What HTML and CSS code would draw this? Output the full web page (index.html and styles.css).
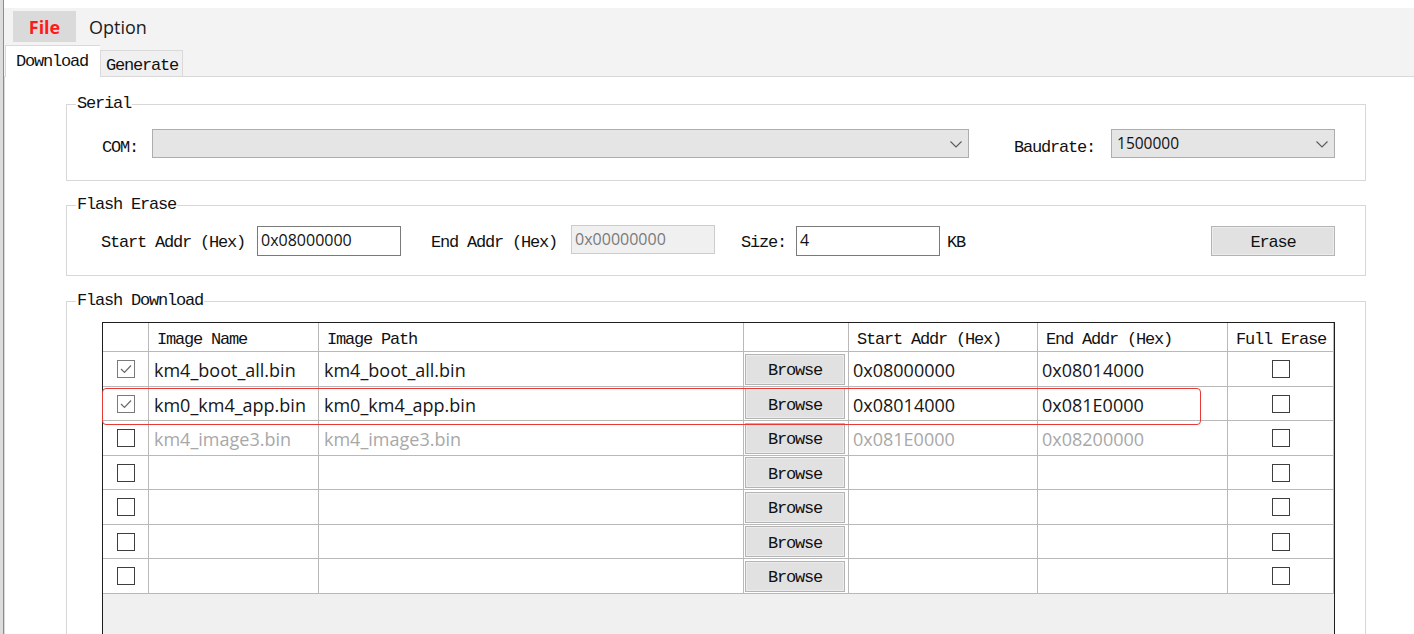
FILE: index.html
```html
<!DOCTYPE html>
<html lang="en">
<head>
<meta charset="utf-8">
<title>Image Tool</title>
<link rel="stylesheet" href="styles.css">
</head>
<body>
<div class="screen">
  <div class="backdrop"></div>
  <div class="window">
    <div class="topgap"></div>
    <div class="menubar">
      <div class="menu menu-file">File</div>
      <div class="menu menu-option">Option</div>
    </div>
    <div class="tabs">
      <div class="tab tab-active">Download</div>
      <div class="tab">Generate</div>
    </div>
    <div class="panel">
      <fieldset class="group group-serial">
        <legend>Serial</legend>
        <div class="row row-serial">
          <span class="label">COM:</span>
          <div class="combo combo-com">
            <span class="combo-text"></span>
            <svg class="chev" width="12" height="7" viewBox="0 0 12 7"><polyline points="0.5,0.5 6,6 11.5,0.5" fill="none" stroke="#5a5a5a" stroke-width="1.1"/></svg>
          </div>
          <span class="label label-baud">Baudrate:</span>
          <div class="combo combo-baud">
            <span class="combo-text">1500000</span>
            <svg class="chev" width="12" height="7" viewBox="0 0 12 7"><polyline points="0.5,0.5 6,6 11.5,0.5" fill="none" stroke="#5a5a5a" stroke-width="1.1"/></svg>
          </div>
        </div>
      </fieldset>

      <fieldset class="group group-erase">
        <legend>Flash Erase</legend>
        <div class="row row-erase">
          <span class="label">Start Addr (Hex)</span>
          <div class="input input-start">0x08000000</div>
          <span class="label label-end">End Addr (Hex)</span>
          <div class="input input-disabled">0x00000000</div>
          <span class="label label-size">Size:</span>
          <div class="input input-size">4</div>
          <span class="label label-kb">KB</span>
          <div class="button button-erase">Erase</div>
        </div>
      </fieldset>

      <fieldset class="group group-download">
        <legend>Flash Download</legend>
        <div class="grid-wrap">
          <div class="grid" role="table">
            <div class="cell head"></div>
            <div class="cell head">Image Name</div>
            <div class="cell head">Image Path</div>
            <div class="cell head"></div>
            <div class="cell head">Start Addr (Hex)</div>
            <div class="cell head">End Addr (Hex)</div>
            <div class="cell head">Full Erase</div>

            <div class="cell ctr"><span class="check checked"><svg width="16" height="16" viewBox="0 0 16 16"><polyline points="3,8 6.5,11.5 13,4.5" fill="none" stroke="#6a6a6a" stroke-width="1.2"/></svg></span></div>
            <div class="cell txt">km4_boot_all.bin</div>
            <div class="cell txt">km4_boot_all.bin</div>
            <div class="cell btncell"><div class="button button-browse">Browse</div></div>
            <div class="cell txt addr">0x08000000</div>
            <div class="cell txt addr">0x08014000</div>
            <div class="cell ctr"><span class="check"></span></div>

            <div class="cell ctr"><span class="check checked"><svg width="16" height="16" viewBox="0 0 16 16"><polyline points="3,8 6.5,11.5 13,4.5" fill="none" stroke="#6a6a6a" stroke-width="1.2"/></svg></span></div>
            <div class="cell txt">km0_km4_app.bin</div>
            <div class="cell txt">km0_km4_app.bin</div>
            <div class="cell btncell"><div class="button button-browse">Browse</div></div>
            <div class="cell txt addr">0x08014000</div>
            <div class="cell txt addr">0x081E0000</div>
            <div class="cell ctr"><span class="check"></span></div>

            <div class="cell ctr"><span class="check"></span></div>
            <div class="cell txt dim">km4_image3.bin</div>
            <div class="cell txt dim">km4_image3.bin</div>
            <div class="cell btncell"><div class="button button-browse">Browse</div></div>
            <div class="cell txt addr dim">0x081E0000</div>
            <div class="cell txt addr dim">0x08200000</div>
            <div class="cell ctr"><span class="check"></span></div>

            <div class="cell ctr"><span class="check"></span></div>
            <div class="cell txt"></div>
            <div class="cell txt"></div>
            <div class="cell btncell"><div class="button button-browse">Browse</div></div>
            <div class="cell txt"></div>
            <div class="cell txt"></div>
            <div class="cell ctr"><span class="check"></span></div>

            <div class="cell ctr"><span class="check"></span></div>
            <div class="cell txt"></div>
            <div class="cell txt"></div>
            <div class="cell btncell"><div class="button button-browse">Browse</div></div>
            <div class="cell txt"></div>
            <div class="cell txt"></div>
            <div class="cell ctr"><span class="check"></span></div>

            <div class="cell ctr"><span class="check"></span></div>
            <div class="cell txt"></div>
            <div class="cell txt"></div>
            <div class="cell btncell"><div class="button button-browse">Browse</div></div>
            <div class="cell txt"></div>
            <div class="cell txt"></div>
            <div class="cell ctr"><span class="check"></span></div>

            <div class="cell ctr"><span class="check"></span></div>
            <div class="cell txt"></div>
            <div class="cell txt"></div>
            <div class="cell btncell"><div class="button button-browse">Browse</div></div>
            <div class="cell txt"></div>
            <div class="cell txt"></div>
            <div class="cell ctr"><span class="check"></span></div>
          </div>
          <div class="highlight"></div>
        </div>
      </fieldset>
    </div>
  </div>
</div>
</body>
</html>
```

FILE: styles.css
```css
* { box-sizing: border-box; }
html, body { margin: 0; padding: 0; }
body {
  width: 1414px;
  height: 634px;
  overflow: hidden;
  background: #ffffff;
  font-family: "Liberation Mono", monospace;
  font-size: 17px;
  letter-spacing: -1.2px;
  color: #111111;
}
.screen { display: flex; height: 634px; overflow: hidden; }
.backdrop {
  flex: none;
  width: 4px;
  background: #dcdcdc;
  border-right: 1px solid #8c8c8c;
}
.window { flex: 1; display: flex; flex-direction: column; min-width: 0; overflow: hidden; }
.topgap { height: 8px; background: #ffffff; flex: none; }

.menubar {
  flex: none;
  display: flex;
  align-items: flex-start;
  height: 36px;
  padding: 3px 0 0 9px;
  background: #f3f3f3;
  font-family: "Open Sans", "Noto Sans", sans-serif;
  font-size: 18px;
  letter-spacing: 0;
}
.menu { height: 31px; line-height: 33px; color: #1b1b1b; }
.menu-file {
  width: 63px;
  text-align: center;
  background: #dadada;
  color: #ff1a1a;
  font-weight: 700;
}
.menu-option { margin-left: 13px; }

.tabs {
  flex: none;
  display: flex;
  align-items: flex-end;
  height: 32px;
  padding-left: 1px;
  background: #f3f3f3;
}
.tab {
  height: 26px;
  line-height: 29px;
  padding: 0 4px 0 5px;
  background: #f0f0f0;
  border: 1px solid #d9d9d9;
  border-bottom: none;
}
.tab-active {
  position: relative;
  z-index: 1;
  height: 32px;
  line-height: 32px;
  margin-bottom: -1px;
  padding: 0 12px 0 10px;
  background: #ffffff;
  border-right: none;
}

.panel {
  flex: 1;
  background: #ffffff;
  border-top: 1px solid #d9d9d9;
  border-left: 1px solid #d9d9d9;
  padding-left: 61px;
  display: flex;
  flex-direction: column;
  align-items: flex-start;
}

.group {
  width: 1300px;
  margin: 0;
  padding: 0 9px;
  min-width: 0;
  border: 1px solid #d7d7d7;
}
.group legend {
  padding: 0 1px;
  line-height: 18px;
  height: 18px;
}
.group-serial { margin-top: 18px; padding-top: 16px; padding-bottom: 22px; }
.group-erase { margin-top: 15px; padding-top: 11px; padding-bottom: 19px; }
.group-download { margin-top: 16px; padding-top: 12px; height: 400px; flex: none; }

.row { display: flex; align-items: center; padding-left: 26px; }
.row-erase { padding-left: 25px; padding-right: 21px; }
.label { white-space: pre; padding-top: 4px; }
.row-serial .label { padding-top: 8px; }

.combo {
  display: flex;
  align-items: center;
  justify-content: space-between;
  height: 29px;
  padding: 0 6px 0 5px;
  background: #e5e5e5;
  border: 1px solid #adadad;
  font-family: "Open Sans", "Noto Sans", sans-serif;
  font-size: 15.5px;
  letter-spacing: 0;
  color: #111111;
}
.combo-text { margin-top: -1px; }
.combo-com { width: 817px; margin-left: 14px; }
.label-baud { margin-left: 45px; }
.combo-baud { width: 224px; margin-left: 16px; }
.chev { flex: none; margin-top: 1px; }

.input {
  width: 144px;
  height: 30px;
  line-height: 27px;
  padding-left: 3px;
  border: 1px solid #7a7a7a;
  background: #ffffff;
  font-family: "Open Sans", "Noto Sans", sans-serif;
  font-size: 16px;
  letter-spacing: 0;
  color: #111111;
}
.input-start { margin-left: 12px; }
.label-end { margin-left: 30px; }
.input-disabled {
  margin-left: 14px;
  height: 29px;
  margin-top: -2px;
  background: #f0f0f0;
  border-color: #cccccc;
  color: #7a7a7a;
}
.label-size { margin-left: 26px; }
.input-size { margin-left: 10px; }
.label-kb { margin-left: 7px; }

.button {
  display: flex;
  align-items: center;
  justify-content: center;
  background: #e1e1e1;
  border: 1px solid #b4b4b4;
  box-shadow: inset 0 0 0 1px #ececec;
  padding-top: 3px;
}
.button-erase { margin-left: auto; width: 124px; height: 30px; margin-top: 1px; }

.grid-wrap {
  position: relative;
  width: 1233px;
  height: 340px;
  margin-left: 26px;
  border: 1px solid #1e1e1e;
  background: #f0f0f0;
}
.grid {
  display: grid;
  grid-template-columns: 46px 170px 425px 105px 189px 190px 106px;
  grid-template-rows: 29px 35px 34px 35px 34px 35px 34px 35px;
  background: #ffffff;
}
.cell {
  border-right: 1px solid #b9b9b9;
  border-bottom: 1px solid #b9b9b9;
  display: flex;
  align-items: center;
  overflow: hidden;
  white-space: nowrap;
}
.head { padding-left: 8px; padding-top: 4px; }
.txt {
  padding-left: 5px;
  padding-top: 2px;
  font-family: "Open Sans", "Noto Sans", sans-serif;
  font-size: 18px;
  letter-spacing: 0;
  color: #161616;
}
.addr { padding-left: 4px; }
.dim { color: #a8a8a8; }
.ctr { justify-content: center; }
.check {
  display: flex;
  align-items: center;
  justify-content: center;
  width: 18px;
  height: 18px;
  border: 1px solid #3e3e3e;
  background: #ffffff;
}
.check.checked { border-color: #7a7a7a; }
.btncell { padding: 0 3px 0 1px; }
.button-browse { width: 100px; height: 31px; }

.highlight {
  position: absolute;
  left: -1px;
  top: 65px;
  width: 1099px;
  height: 37px;
  border: 1.5px solid #e53a36;
  border-radius: 4px;
}
```
